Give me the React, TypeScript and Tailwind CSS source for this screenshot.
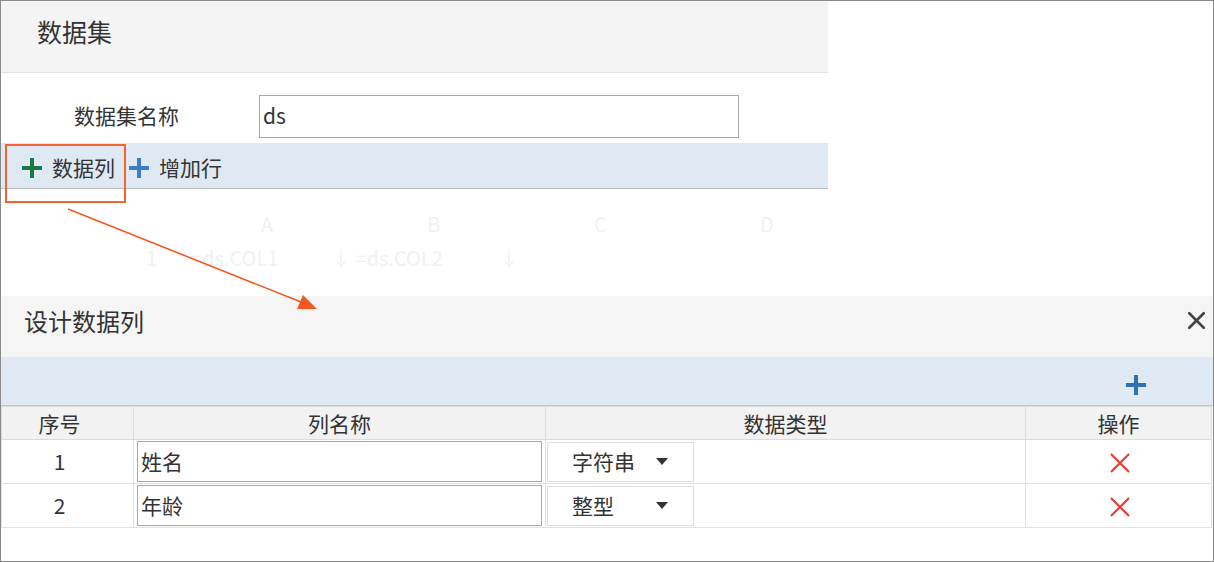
import { X } from 'lucide-react'

const font = { fontFamily: '"Noto Sans CJK SC", "Noto Sans", sans-serif' }

function Plus({ color }: { color: string }) {
  return (
    <svg width="22" height="22" viewBox="0 0 22 22">
      <rect x="9" y="1" width="4" height="20" fill={color} />
      <rect x="1" y="9" width="20" height="4" fill={color} />
    </svg>
  )
}

function Caret() {
  return (
    <svg width="12" height="7" viewBox="0 0 12 7">
      <path d="M0 0 L12 0 L6 7 Z" fill="#333" />
    </svg>
  )
}

function RedX() {
  return (
    <svg width="22" height="22" viewBox="0 0 22 22">
      <path d="M2 2 L20 20 M20 2 L2 20" stroke="#ee3d33" strokeWidth="2.2" />
    </svg>
  )
}

const rows = [
  { no: 1, name: '姓名', type: '字符串' },
  { no: 2, name: '年龄', type: '整型' },
]

export default function App() {
  return (
    <div
      className="relative w-[1214px] h-[562px] overflow-hidden border border-[#8a8a8a] bg-white text-[#333]"
      style={font}
    >
      {/* 数据集 panel */}
      <div className="w-[827px]">
        <div className="h-[72px] bg-[#f4f4f4] border-b border-[#e2e2e2] flex items-center pl-[36px] pb-[10px]">
          <span className="text-[25px]">数据集</span>
        </div>
        <div className="h-[70px] flex items-center pt-[16px]">
          <span className="w-[258px] pl-[73px] text-[21px]">数据集名称</span>
          <div className="w-[480px] h-[43px] border border-[#a8a8a8] flex items-center pl-[3px] text-[21px]">
            ds
          </div>
        </div>
        <div className="h-[46px] bg-[#dfe9f3] border-b border-[#bdbdbd] flex items-center pl-[20px] pt-[4px] text-[21px]">
          <Plus color="#177a45" />
          <span className="ml-[9px]">数据列</span>
          <span className="ml-[13px] flex items-center">
            <Plus color="#3a7fc4" />
          </span>
          <span className="ml-[9px]">增加行</span>
        </div>
        {/* faded sheet underneath */}
        <div className="h-[107px] text-[20px] text-[#f1f1f1]">
          <div className="flex pt-[20px] pl-[260px]">
            <span className="w-[166px]">A</span>
            <span className="w-[167px]">B</span>
            <span className="w-[166px]">C</span>
            <span>D</span>
          </div>
          <div className="flex pt-[4px] pl-[145px] whitespace-nowrap">
            <span className="w-[45px]">1</span>
            <span className="w-[140px]">=ds.COL1</span>
            <span className="w-[168px]">↓ =ds.COL2</span>
            <span>↓</span>
          </div>
        </div>
      </div>

      {/* 设计数据列 dialog */}
      <div className="h-[61px] bg-[#f5f5f5] flex items-center justify-between pl-[23px] pr-[2px] pb-[12px]">
        <span className="text-[24px]">设计数据列</span>
        <X size={29} strokeWidth={2.2} color="#444" />
      </div>
      <div className="h-[49px] bg-[#dfe9f3] border-b border-[#c6c6c6] flex items-end justify-end pr-[66px] pb-[9px]">
        <Plus color="#2f6fb5" />
      </div>
      <table className="border-collapse table-fixed text-[21px]">
        <colgroup>
          <col className="w-[132px]" />
          <col className="w-[412px]" />
          <col className="w-[480px]" />
          <col className="w-[186px]" />
        </colgroup>
        <thead>
          <tr className="h-[33px] bg-[#f2f2f2]">
            <th className="font-normal border border-[#dcdcdc] text-center leading-none pr-[16px]">序号</th>
            {['列名称', '数据类型', '操作'].map((h) => (
              <th key={h} className="font-normal border border-[#dcdcdc] text-center leading-none">
                {h}
              </th>
            ))}
          </tr>
        </thead>
        <tbody>
          {rows.map((r) => (
            <tr key={r.no} className="h-[44px]">
              <td className="border border-[#e2e2e2] text-center leading-none pr-[16px]">{r.no}</td>
              <td className="border border-[#e2e2e2] px-[3px]">
                <div className="h-[41px] border border-[#a8a8a8] flex items-center pl-[3px]">{r.name}</div>
              </td>
              <td className="border border-[#e2e2e2] p-0 pl-[1px]">
                <div className="w-[147px] h-[40px] border border-[#dedede] flex items-center pl-[24px]">
                  <span className="w-[84px]">{r.type}</span>
                  <Caret />
                </div>
              </td>
              <td className="border border-[#e2e2e2]">
                <div className="flex justify-center pl-[2px] pt-[2px]">
                  <RedX />
                </div>
              </td>
            </tr>
          ))}
        </tbody>
      </table>

      {/* annotation overlay */}
      <div className="absolute left-[4px] top-[143px] w-[121px] h-[59px] border-2 border-[#f26430]" />
      <svg className="absolute left-0 top-0" width="1214" height="562">
        <line x1="67" y1="208" x2="300" y2="301" stroke="#f4581f" strokeWidth="1.6" />
        <path d="M316 308 L296 308 L302 294 Z" fill="#f4581f" />
      </svg>
    </div>
  )
}
